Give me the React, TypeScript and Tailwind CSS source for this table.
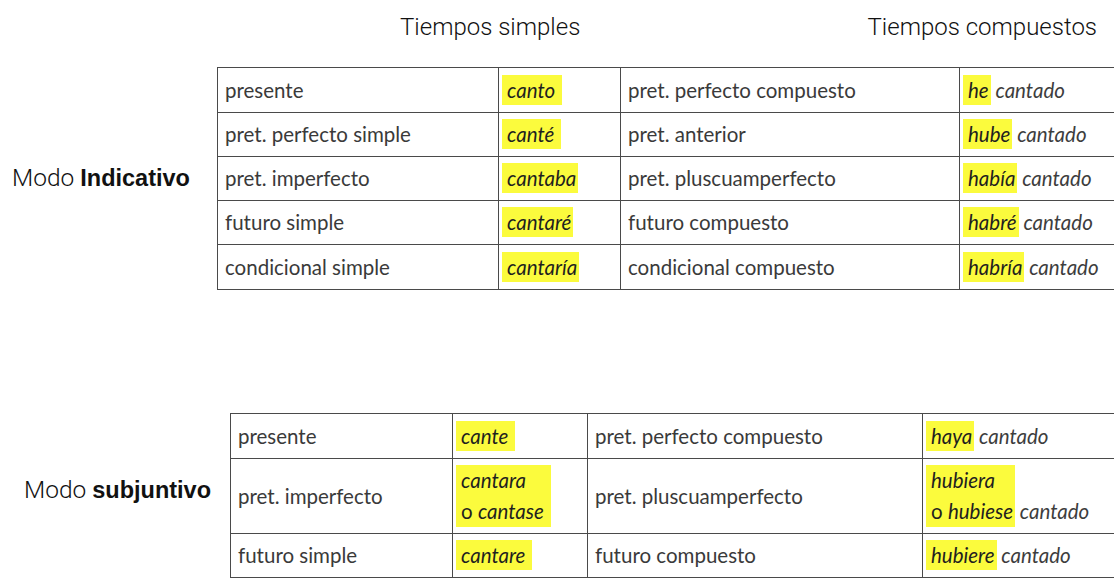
import type { ReactNode } from 'react';

type Row = {
  simple: string;
  simpleForm: ReactNode;
  compound: string;
  compoundForm: ReactNode;
  h: string;
};

// yellow marker used over the verb forms
function Mark({ children }: { children: ReactNode }) {
  return <span className="inline-block bg-[#fbfb3d] pl-[5px] pr-[2px] leading-[30px] text-[#1f1f1f]">{children}</span>;
}

function Aux({ aux }: { aux: string }) {
  return (
    <>
      <Mark>{aux}</Mark>
      <span className="text-[#3d3d3d]"> cantado</span>
    </>
  );
}

const indicativo: Row[] = [
  { simple: 'presente', simpleForm: <Mark>canto&nbsp;</Mark>, compound: 'pret. perfecto compuesto', compoundForm: <Aux aux="he" />, h: 'h-[45px]' },
  { simple: 'pret. perfecto simple', simpleForm: <Mark>canté&nbsp;</Mark>, compound: 'pret. anterior', compoundForm: <Aux aux="hube" />, h: 'h-[44px]' },
  { simple: 'pret. imperfecto', simpleForm: <Mark>cantaba</Mark>, compound: 'pret. pluscuamperfecto', compoundForm: <Aux aux="había" />, h: 'h-[44px]' },
  { simple: 'futuro simple', simpleForm: <Mark>cantaré</Mark>, compound: 'futuro compuesto', compoundForm: <Aux aux="habré" />, h: 'h-[44px]' },
  { simple: 'condicional simple', simpleForm: <Mark>cantaría</Mark>, compound: 'condicional compuesto', compoundForm: <Aux aux="habría" />, h: 'h-[45px]' },
];

const subjuntivo: Row[] = [
  { simple: 'presente', simpleForm: <Mark>cante&nbsp;</Mark>, compound: 'pret. perfecto compuesto', compoundForm: <Aux aux="haya" />, h: 'h-[45px]' },
  {
    simple: 'pret. imperfecto',
    simpleForm: (
      <span className="inline-block bg-[#fbfb3d] pl-[5px] pr-[2px] leading-[31px] text-[#1f1f1f]">
        cantara
        <br />
        <span className="not-italic">o </span>cantase&nbsp;
      </span>
    ),
    compound: 'pret. pluscuamperfecto',
    compoundForm: (
      <>
        <span className="inline-block bg-[#fbfb3d] pl-[5px] pr-[2px] leading-[31px] text-[#1f1f1f]">
          hubiera
          <br />
          <span className="not-italic">o </span>hubiese
        </span>
        <span className="text-[#3d3d3d]"> cantado</span>
      </>
    ),
    h: 'h-[75px]',
  },
  { simple: 'futuro simple', simpleForm: <Mark>cantare&nbsp;</Mark>, compound: 'futuro compuesto', compoundForm: <Aux aux="hubiere" />, h: 'h-[44px]' },
];

function TenseTable({ rows, widths }: { rows: Row[]; widths: number[] }) {
  return (
    <table className="table-fixed border-collapse text-[20.5px] text-[#3a3a3a]" style={{ width: widths.reduce((a, b) => a + b, 0) }}>
      <colgroup>
        {widths.map((w, i) => (
          <col key={i} style={{ width: w }} />
        ))}
      </colgroup>
      <tbody>
        {rows.map((r) => (
          <tr key={r.simple} className={r.h}>
            <td className="border border-[#4a4a4a] px-[7px] whitespace-nowrap">{r.simple}</td>
            <td className="border border-[#4a4a4a] px-[3px] italic whitespace-nowrap">{r.simpleForm}</td>
            <td className="border border-[#4a4a4a] px-[7px] whitespace-nowrap">{r.compound}</td>
            <td className="border border-[#4a4a4a] px-[3px] italic whitespace-nowrap">{r.compoundForm}</td>
          </tr>
        ))}
      </tbody>
    </table>
  );
}

function ModeLabel({ name }: { name: string }) {
  return (
    <>
      Modo <span className="font-['Liberation_Sans',sans-serif] text-[23.5px] font-bold">{name}</span>
    </>
  );
}

export default function App() {
  return (
    <div className="w-[1114px] h-[588px] overflow-hidden bg-white font-['Lato',sans-serif]">
      {/* column headings */}
      <div className="flex h-[67px] pt-[9px] font-['Roboto',sans-serif] text-[24px] font-light text-[#111]">
        <span className="ml-[400px]">Tiempos simples</span>
        <span className="ml-auto mr-[17px]">Tiempos compuestos</span>
      </div>

      <div className="flex items-center">
        <div className="w-[217px] shrink-0 pl-[12px] font-['Roboto',sans-serif] text-[24.5px] font-light text-[#111]">
          <ModeLabel name="Indicativo" />
        </div>
        <TenseTable rows={indicativo} widths={[281, 122, 339, 220]} />
      </div>

      <div className="mt-[123px] flex items-center">
        <div className="w-[230px] shrink-0 -mt-[10px] pl-[24px] font-['Roboto',sans-serif] text-[24.5px] font-light text-[#111]">
          <ModeLabel name="subjuntivo" />
        </div>
        <TenseTable rows={subjuntivo} widths={[222, 135, 335, 220]} />
      </div>
    </div>
  );
}
